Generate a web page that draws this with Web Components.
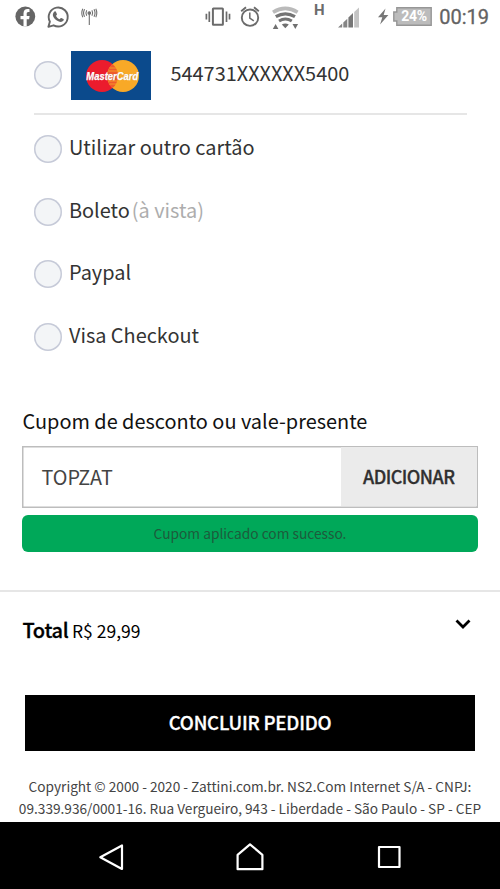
<!DOCTYPE html>
<html lang="pt-BR">
<head>
<meta charset="utf-8">
<title>Zattini - Pagamento</title>
<style>
html,body{margin:0;padding:0}
body{width:500px;height:889px;overflow:hidden;background:#fff;font-family:"Noto Sans CJK SC","Noto Sans",sans-serif;color:#333}
</style>
</head>
<body>
<checkout-page></checkout-page>
<script>
const define = (name, css, html) => customElements.define(name, class extends HTMLElement {
  constructor() {
    super();
    this.attachShadow({mode: 'open'}).innerHTML = `<style>*{box-sizing:border-box}svg{display:block}${css}</style>${html}`;
  }
});

define('status-bar', `
:host{display:flex;height:34px;align-items:flex-start;color:#666}
.clock{font:400 20px/24px Roboto,sans-serif;color:#636363;-webkit-text-stroke:.3px #636363;margin:5px 0 0 auto;padding-right:11px}
.battery{display:grid;place-items:center;width:39px;height:19px;margin:7px 0 0 1px;position:relative}
.battery svg{position:absolute;inset:0}
.battery span{position:relative;font:700 14px/19px Roboto,sans-serif;letter-spacing:-.3px;color:#fff;padding-left:3px}
.h{font:700 15px/16px Roboto,sans-serif;color:#6c6c6c;margin:2px 0 0 12px;width:13px}
`, `
<svg width="110" height="34" viewBox="0 0 110 34">
  <circle cx="25.3" cy="16.5" r="9.9" fill="#666"/>
  <path d="M23.5 26.5v-7.2h-3v-3.2h3v-2.7c0-2.8 1.6-4.3 4-4.3 1 0 2 .2 2 .2v2.6h-1.2c-1.2 0-1.6.8-1.6 1.6v2.6h2.9l-.5 3.2h-2.4v7.2z" fill="#fff"/>
  <path d="M48.4 26.8l1.5-5.2a9.5 9.5 0 1 1 3.7 3.7z" fill="none" stroke="#666" stroke-width="1.9" stroke-linejoin="round"/>
  <path d="M54.3 11.7c.7-.6 1.4-.5 1.7.2l.9 2c.2.5-.1.9-.9 1.8.8 1.700 2 2.800 3.700 3.500.9-1.100 1.200-1.400 1.700-1.200l2 1c.6.3.5 1-.1 1.800-1.300 1.500-3 1.300-5 .5-2.700-1.100-4.600-3.300-5.300-5.200-.5-1.700.2-3.500 1.300-4.400z" fill="#666"/>
  <g fill="none" stroke="#707070" stroke-width="1.1">
    <path d="M89.300 14v11"/><circle cx="89.300" cy="13" r="1.300" fill="#707070"/>
    <path d="M86.700 10.300q-1.500 2.700 0 5.400M84.600 9.300q-2.100 3.700 0 7.400M82.800 8.700q-2 4.300 0 8.600M91.900 10.300q1.500 2.700 0 5.400M94 9.300q2.100 3.700 0 7.400M95.800 8.700q2 4.300 0 8.600"/>
  </g>
</svg>
<svg width="192" height="34" viewBox="110 0 192 34">
  <g fill="none" stroke="#6b6b6b">
    <rect x="212.900" y="8.400" width="10" height="16.300" rx=".5" stroke-width="2"/>
    <path d="M209.300 11.500v10.500M226.500 11.500v10.500" stroke-width="1.700"/>
    <path d="M206.400 13.800v5.600M229.500 13.800v5.600" stroke-width="1.700"/>
    <circle cx="250" cy="17.700" r="8.200" stroke-width="1.900"/>
    <path d="M249.800 12.500v5.600l4 2.700" stroke-width="1.500"/>
    <path d="M241.200 11.300l4.800-4M258.800 11.300l-4.800-4" stroke-width="1.900"/>
    <path d="M273 12.200q12.300-7.600 24.600 0" stroke="#bababa" stroke-width="3.600"/>
    <path d="M275.800 16.700q9.600-5.800 19.200 0" stroke="#747474" stroke-width="3.200"/>
    <path d="M279 21q6.400-4 12.800 0" stroke="#747474" stroke-width="3.100"/>
  </g>
  <path d="M281.800 24.600q3.500-2.200 7 0l-3.500 3.600zM272.800 29l2.800-5 2.800 5zM292.500 24h5.600l-2.800 5z" fill="#707070"/>
</svg>
<span class="h">H</span>
<svg width="50" height="34" viewBox="327 0 50 34">
  <path d="M338 27.500l4.200-4v4zM343.300 22.500l4-3.800v8.800h-4z" fill="#858585"/>
  <path d="M348.400 17.600l4.600-4.600v14.500h-4.600z" fill="#777"/><path d="M354.200 12l4.800-4.500v20h-4.800z" fill="#c4c4c4"/>
</svg>
<svg width="16" height="34" viewBox="376 0 16 34" style="margin-left:-1px"><path d="M385.500 8.500l-7.500 8.800h4.300l-2.200 7.300 8.300-9.600h-4.700z" fill="#777"/></svg>
<div class="battery">
  <svg width="39" height="19" viewBox="0 0 39 19"><path d="M.8 5h3V.8h34.400v17.400H3.800V14h-3z" fill="#bcbcbc" stroke="#969696" stroke-width="1.400"/></svg>
  <span>24%</span>
</div>
<span class="clock">00:19</span>`);

define('radio-dot', `:host{display:block;flex:none;width:28px;height:28px;box-shadow:inset 0 0 0 1.500px #c6cad8;border-radius:50%;background:#f3f5f7}`, ``);

define('master-card', `
:host{display:block;width:80px;height:49px;background:#0b4a8c}`, `
<svg width="80" height="49" viewBox="0 0 80 49">
  <circle cx="31" cy="25" r="16" fill="#eb1c2d"/><circle cx="52" cy="25" r="16" fill="#f8a927"/>
  <path d="M41.500 12.900a16 16 0 0 1 0 24.200 16 16 0 0 1 0-24.200z" fill="#ee5a2c"/>
  <path d="M38.500 17h6.500M37 20h9M37 30h9M38.500 33h6.500" stroke="#f8a927" stroke-width=".8"/>
  <text x="15.800" y="29.200" textLength="52" lengthAdjust="spacingAndGlyphs" font-family="Liberation Sans,sans-serif" font-weight="700" font-style="italic" font-size="11" fill="#234" opacity=".35">MasterCard</text>
  <text x="15.300" y="28.700" textLength="52" lengthAdjust="spacingAndGlyphs" font-family="Liberation Sans,sans-serif" font-weight="700" font-style="italic" font-size="11" fill="#fff" stroke="#fff" stroke-width=".25">MasterCard</text>
</svg>`);

define('saved-card', `
:host{display:flex;align-items:center;height:81px;margin:0 33px 0 34px;padding-top:3px;border-bottom:2px solid #e6e6e6;font-size:19.900px;line-height:28px}
master-card{margin-left:9px;margin-top:1px}
span{margin-left:19.500px;padding-bottom:4px}`, `
<radio-dot></radio-dot><master-card></master-card><span><slot></slot></span>`);

define('pay-option', `
:host{display:flex;align-items:center;height:62.500px;padding-left:34px;font-size:19.900px;line-height:28px}
span{margin-left:7px;padding-bottom:4px;white-space:pre}
::slotted(small){font-size:19.900px;color:#adadad;margin-left:2px}`, `
<radio-dot></radio-dot><span><slot></slot></span>`);

define('coupon-box', `
:host{display:block;padding:0 22px}
h2{margin:0;font-weight:400;font-size:19.900px;line-height:28px;color:#111;padding:1px 0 0 .5px}
.field{display:flex;height:62px;margin-top:11px;box-shadow:inset 0 0 0 1.500px #bdbdbd;padding:1.500px}
.value{flex:1;padding-left:18px;font-size:19.800px;line-height:59px;color:#444}
.add{width:135.500px;background:#ebebeb;text-align:center;font-weight:500;font-size:18px;letter-spacing:-.55px;line-height:58px;color:#303030;-webkit-text-stroke:.3px #303030}
.ok{height:37px;margin-top:7.500px;border-radius:6px;background:#00a859;color:#1d5b3c;font-size:13.750px;line-height:36px;text-align:center}`, `
<h2>Cupom de desconto ou vale-presente</h2>
<div class="field"><div class="value">TOPZAT</div><div class="add">ADICIONAR</div></div>
<div class="ok">Cupom aplicado com sucesso.</div>`);

define('order-total', `
:host{display:flex;justify-content:space-between;align-items:flex-start;height:105px;border-top:2px solid #e6e6e6;padding:24px 29px 0 22.500px;color:#000;line-height:28px}
b{font-weight:500;font-size:20px;letter-spacing:-.3px;-webkit-text-stroke:.3px #000}
span{font-size:17.500px}
svg{margin-top:3px}`, `
<div><b>Total</b> <span>R$ 29,99</span></div>
<svg width="16" height="11" viewBox="0 0 16 11"><path d="M1.500 1.500L8 8l6.500-6.500" fill="none" stroke="#000" stroke-width="2.800"/></svg>`);

define('finish-button', `
:host{display:block;margin:0 25px;height:56px;background:#000;color:#fff;text-align:center;font-weight:500;font-size:18.670px;letter-spacing:-.22px;line-height:53px;-webkit-text-stroke:.3px #fff}`, `<slot></slot>`);

define('legal-note', `
:host{display:block;text-align:center;font-size:13.670px;line-height:22.300px;padding-top:24px;height:71px;overflow:hidden;white-space:nowrap;color:#444}`, `<slot></slot>`);

define('nav-bar', `
:host{display:flex;justify-content:space-around;align-items:center;height:67px;background:#000;padding:3px 42px 0}
svg{overflow:visible;fill:none;stroke:#fff;stroke-width:2.200;stroke-linejoin:round}`, `
<svg width="28" height="28"><path d="M25 2.500v23.500L3.300 14.200z"/></svg>
<svg width="28" height="28"><path d="M1.600 11.800L14 1.300l12.400 10.500v14.400H1.600z"/></svg>
<svg width="28" height="28"><rect x="4" y="4" width="20.500" height="20"/></svg>`);

define('checkout-page', `
:host{display:flex;flex-direction:column;height:889px}
.options{margin-top:3px}
coupon-box{margin-top:37.500px}
order-total{margin-top:37.500px}`, `
<status-bar></status-bar>
<saved-card>544731XXXXXX5400</saved-card>
<div class="options">
  <pay-option>Utilizar outro cartão</pay-option>
  <pay-option>Boleto<small>(à vista)</small></pay-option>
  <pay-option>Paypal</pay-option>
  <pay-option>Visa Checkout</pay-option>
</div>
<coupon-box></coupon-box>
<order-total></order-total>
<finish-button>CONCLUIR PEDIDO</finish-button>
<legal-note>Copyright © 2000 - 2020 - Zattini.com.br. NS2.Com Internet S/A - CNPJ:<br>09.339.936/0001-16. Rua Vergueiro, 943 - Liberdade - São Paulo - SP - CEP</legal-note>
<nav-bar></nav-bar>`);
</script>
</body>
</html>
